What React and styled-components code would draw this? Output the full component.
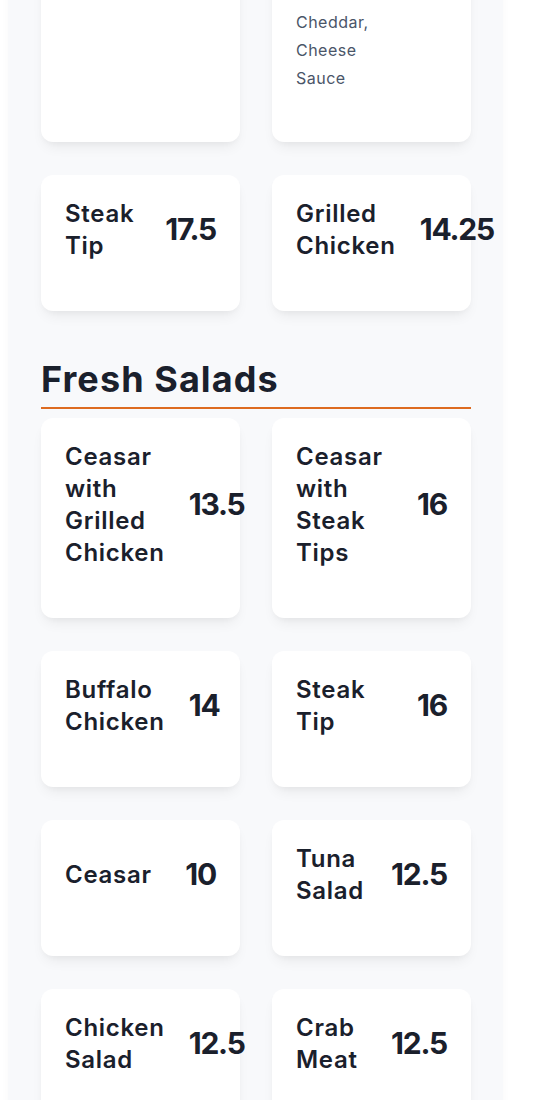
import React from "react";
import styled, { createGlobalStyle } from "styled-components";

const GlobalStyle = createGlobalStyle`
  html, body {
    margin: 0;
    padding: 0;
    background: #ffffff;
    overflow: hidden;
  }
  body {
    font-family: Inter, "Noto Sans", sans-serif;
    color: #1a202c;
  }
`;

const Panel = styled.div`
  box-sizing: border-box;
  width: 495px;
  margin-left: 8px;
  min-height: 1100px;
  padding: 0 32px 0 33px;
  background: #f8f9fb;
  box-shadow: 0 0 8px rgba(0, 0, 0, 0.03);
`;

const Grid = styled.div`
  display: grid;
  grid-template-columns: 199px 199px;
  column-gap: 32px;
  row-gap: 33px;
  margin-top: ${(p) => (p.$pullUp ? `-${p.$pullUp}px` : "0")};
`;

const Card = styled.div`
  box-sizing: border-box;
  background: #ffffff;
  border-radius: 12px;
  padding: 24px 24px 48px;
  box-shadow: 0 8px 14px -4px rgba(0, 0, 0, 0.07), 0 3px 6px -2px rgba(0, 0, 0, 0.04);
`;

const ItemRow = styled.div`
  display: flex;
  align-items: center;
  justify-content: space-between;
  min-height: 64px;
`;

const ItemName = styled.div`
  font-size: 24px;
  line-height: 32px;
  font-weight: 600;
  margin-right: 24px;
  letter-spacing: 0.03em;
  position: relative;
  top: -1px;
`;

const Price = styled.div`
  font-size: 30px;
  line-height: 36px;
  font-weight: 700;
  letter-spacing: -0.04em;
  flex-shrink: 0;
  white-space: nowrap;
  position: relative;
  top: -2px;
`;

const Description = styled.p`
  margin: 24px 0 0;
  padding-bottom: 2px;
  font-size: 16px;
  line-height: 28px;
  letter-spacing: 0.03em;
  color: #4a5568;
  width: 90px;
`;

const SectionTitle = styled.h2`
  margin: 48px 0 9px;
  padding-bottom: 8px;
  font-size: 36px;
  line-height: 40px;
  font-weight: 700;
  letter-spacing: 0.03em;
  color: #1a202c;
  border-bottom: 2px solid #dd6b20;
`;

const salads = [
  { name: "Ceasar with Grilled Chicken", price: "13.5" },
  { name: "Ceasar with Steak Tips", price: "16" },
  { name: "Buffalo Chicken", price: "14" },
  { name: "Steak Tip", price: "16" },
  { name: "Ceasar", price: "10" },
  { name: "Tuna Salad", price: "12.5" },
  { name: "Chicken Salad", price: "12.5" },
  { name: "Crab Meat", price: "12.5" },
];

const MenuCard = ({ name, price }) => (
  <Card>
    <ItemRow>
      <ItemName>{name}</ItemName>
      <Price>{price}</Price>
    </ItemRow>
  </Card>
);

const App = () => (
  <>
    <GlobalStyle />
    <Panel>
      <Grid $pullUp={40}>
        <Card />
        <Card>
          <Description>Cheddar, Cheese Sauce</Description>
        </Card>
        <MenuCard name="Steak Tip" price="17.5" />
        <MenuCard name="Grilled Chicken" price="14.25" />
      </Grid>

      <SectionTitle>Fresh Salads</SectionTitle>
      <Grid>
        {salads.map((item) => (
          <MenuCard key={item.name} name={item.name} price={item.price} />
        ))}
      </Grid>
    </Panel>
  </>
);

export default App;
